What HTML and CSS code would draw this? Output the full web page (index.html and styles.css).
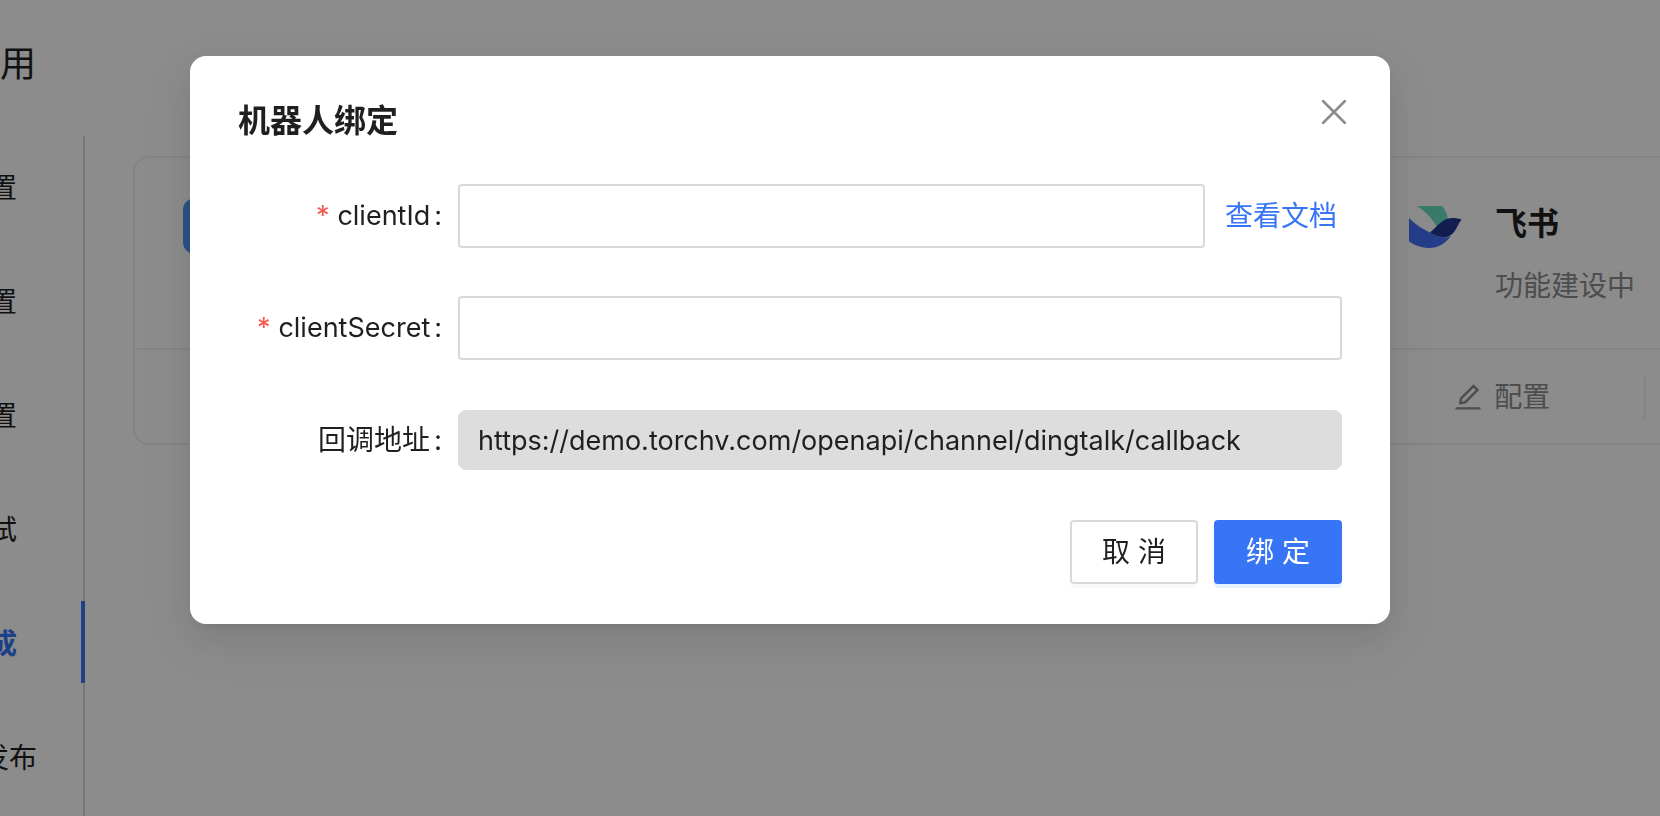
FILE: index.html
```
<!DOCTYPE html>
<html lang="zh-CN">
<head>
    <meta charset="UTF-8">
    <meta name="viewport" content="width=device-width, initial-scale=1.0">
    <title>机器人绑定</title>
    <link rel="stylesheet" href="styles.css">
</head>
<body>
    <div class="page">
        <header class="page-header">
            <h1>用</h1>
        </header>
        <div class="page-main">
            <nav class="side-nav">
                <a href="#">置</a>
                <a href="#">置</a>
                <a href="#">置</a>
                <a href="#">试</a>
                <a href="#" class="active">成</a>
                <a href="#" class="wide">发布</a>
            </nav>
            <main class="card-grid">
                <section class="card">
                    <div class="card-body">
                        <span class="card-icon ding"></span>
                    </div>
                    <div class="card-actions"></div>
                </section>
                <section class="card last">
                    <div class="card-body">
                        <svg class="card-icon" viewBox="0 0 56 56" aria-hidden="true">
                            <path fill="#69dfc2" d="M8 8H33C36 11 38 16 39 21C35 22 31 26 28 29C23 20 16 13 8 8Z"/>
                            <path fill="#456ffa" d="M0 20C6 26 13 31 21 34.500C28 38.500 37 41 42 38C36 46 29 50 20 50C12 50 5 47 0 43.500Z"/>
                            <path fill="#233893" d="M21 34.500C28 29 33 20 43 20C47 20 50 20.500 52.500 21.500C48 27 46 38 37 39C31 39.500 25 37 21 34.500Z"/>
                        </svg>
                        <div class="card-text">
                            <h3>飞书</h3>
                            <p>功能建设中</p>
                        </div>
                    </div>
                    <div class="card-actions">
                        <button type="button" class="card-action">
                            <svg viewBox="64 64 896 896" width="28" height="28" fill="currentColor" aria-hidden="true">
                                <path d="M257.700 752c2 0 4-.2 6-.5L431.900 722c2-.4 3.900-1.300 5.300-2.800l423.900-423.900a9.960 9.960 0 000-14.100L694.900 114.900c-1.900-1.900-4.400-2.900-7.100-2.900s-5.200 1-7.100 2.900L256.800 538.800c-1.500 1.500-2.400 3.300-2.800 5.300l-29.500 168.200a33.500 33.500 0 009.400 29.800c6.600 6.400 14.900 9.900 23.800 9.900zm67.400-174.400L687.800 215l73.300 73.300-362.700 362.600-88.900 15.700 15.600-89zM880 836H144c-17.700 0-32 14.300-32 32v36c0 4.400 3.600 8 8 8h784c4.400 0 8-3.600 8-8v-36c0-17.700-14.300-32-32-32z"/>
                            </svg>
                            <span>配置</span>
                        </button>
                    </div>
                </section>
            </main>
        </div>
    </div>

    <div class="modal-mask">
        <div class="modal" role="dialog" aria-modal="true" aria-labelledby="modalTitle">
            <button type="button" class="modal-close" aria-label="关闭">
                <svg viewBox="0 0 24 24" width="24" height="24" fill="none" stroke="currentColor" stroke-width="2.500" stroke-linecap="round" aria-hidden="true">
                    <path d="M1 1L23 23M23 1L1 23"/>
                </svg>
            </button>
            <h2 id="modalTitle">机器人绑定</h2>
            <form class="bind-form">
                <div class="form-row">
                    <label class="required" for="clientId">clientId</label>
                    <input type="text" id="clientId" name="clientId" required>
                    <a class="doc-link" href="#">查看文档</a>
                </div>
                <div class="form-row">
                    <label class="required" for="clientSecret">clientSecret</label>
                    <input type="text" id="clientSecret" name="clientSecret" required>
                </div>
                <div class="form-row">
                    <label for="callback">回调地址</label>
                    <input type="text" id="callback" class="readonly" value="https://demo.torchv.com/openapi/channel/dingtalk/callback" readonly>
                </div>
                <div class="form-footer">
                    <button type="button" class="btn">取 消</button>
                    <button type="submit" class="btn btn-primary">绑 定</button>
                </div>
            </form>
        </div>
    </div>
</body>
</html>
```
FILE: styles.css
```
* {
    box-sizing: border-box;
}
body {
    margin: 0;
    font-family: Inter, "Noto Sans CJK SC", sans-serif;
    font-size: 28px;
    line-height: 44px;
    color: #1f1f1f;
    background: #fff;
    overflow: hidden;
}
h1, h2, h3, p {
    margin: 0;
}
button, input {
    font: inherit;
    color: inherit;
}

/* page behind the dialog */
.page {
    display: flex;
    flex-direction: column;
    height: 100vh;
}
.page-header {
    padding: 40px 0 48px;
}
.page-header h1 {
    font-size: 36px;
    font-weight: 400;
    line-height: 48px;
}
.page-main {
    display: flex;
    flex: 1;
    min-height: 0;
}
.side-nav {
    flex: none;
    display: flex;
    flex-direction: column;
    gap: 32px;
    width: 85px;
    padding-top: 9px;
    background: linear-gradient(#d9d9d9, #d9d9d9) right / 2px 100% no-repeat;
}
.side-nav a {
    display: flex;
    align-items: center;
    justify-content: flex-end;
    flex: none;
    height: 82px;
    padding: 4px 64px 0 0;
    border-right: 4px solid transparent;
    color: #1f1f1f;
    text-decoration: none;
    white-space: nowrap;
}
.side-nav a.wide {
    padding-right: 44px;
}
.side-nav a.active {
    color: #3875f6;
    font-weight: 700;
    border-right-color: #3875f6;
}
.card-grid {
    flex: 1;
    min-width: 0;
    display: grid;
    grid-template-columns: repeat(3, 573px);
    column-gap: 40px;
    align-items: start;
    padding: 20px 0 0 48px;
    overflow: hidden;
}
.card {
    border: 2px solid #f0f0f0;
    border-radius: 16px;
}
.card.last {
    grid-column: 3;
}
.card-body {
    display: flex;
    gap: 30px;
    height: 190px;
    padding: 40px 48px;
}
.card-icon {
    flex: none;
    width: 56px;
    height: 56px;
}
.card-icon.ding {
    border-radius: 12px;
    background: #4c93f5;
}
.card-text {
    padding-top: 2px;
}
.card-text h3 {
    font-size: 32px;
    font-weight: 700;
    line-height: 48px;
}
.card-text p {
    margin-top: 16px;
    color: #8c8c8c;
}
.card-actions {
    display: flex;
    align-items: center;
    height: 95px;
    border-top: 2px solid #f0f0f0;
}
.card-action {
    display: flex;
    align-items: center;
    justify-content: center;
    gap: 12px;
    width: 50%;
    height: 44px;
    padding: 0;
    border: 0;
    border-right: 2px solid #f0f0f0;
    background: none;
    color: #8c8c8c;
}

/* dialog */
.modal-mask {
    position: fixed;
    inset: 0;
    padding: 56px 270px 0 190px;
    background: rgba(0, 0, 0, 0.45);
}
.modal {
    position: relative;
    padding: 40px 48px;
    border-radius: 16px;
    background: #fff;
    box-shadow: 0 12px 32px rgba(0, 0, 0, 0.08), 0 6px 12px -8px rgba(0, 0, 0, 0.12), 0 18px 56px 16px rgba(0, 0, 0, 0.05);
}
.modal h2 {
    margin-bottom: 38px;
    font-size: 32px;
    font-weight: 700;
    line-height: 50px;
}
.modal-close {
    position: absolute;
    top: 34px;
    right: 34px;
    display: flex;
    align-items: center;
    justify-content: center;
    width: 44px;
    height: 44px;
    padding: 0;
    border: 0;
    background: none;
    color: #8c8c8c;
    cursor: pointer;
}
.bind-form {
    display: flex;
    flex-direction: column;
    gap: 48px;
}
.form-row {
    display: flex;
    align-items: center;
    min-height: 64px;
}
.form-row label {
    flex: none;
    width: 220px;
    padding-right: 16px;
    text-align: right;
    white-space: nowrap;
}
.form-row label::after {
    content: ":";
    margin-left: 4px;
}
.form-row label.required {
    font-size: 27px;
}
.form-row label.required::before {
    content: "*";
    margin-right: 8px;
    color: #f5564e;
}
.form-row input {
    flex: 1;
    min-width: 0;
    height: 64px;
    padding: 0 20px;
    border: 2px solid #d9d9d9;
    border-radius: 4px;
    background: #fff;
    font-size: 27px;
    outline: none;
}
.form-row input.readonly {
    height: 60px;
    border: 0;
    border-radius: 8px;
    background: #ddd;
}
.doc-link {
    padding: 0 5px 0 20px;
    color: #3875f6;
    text-decoration: none;
}
.form-footer {
    display: flex;
    justify-content: flex-end;
    gap: 16px;
}
.btn {
    width: 128px;
    height: 64px;
    padding: 0;
    border: 2px solid #d9d9d9;
    border-radius: 4px;
    background: #fff;
    box-shadow: 0 4px 0 rgba(0, 0, 0, 0.02);
    cursor: pointer;
}
.btn-primary {
    border-color: #3875f6;
    background: #3875f6;
    box-shadow: 0 4px 0 rgba(5, 115, 255, 0.1);
    color: #fff;
}
```
